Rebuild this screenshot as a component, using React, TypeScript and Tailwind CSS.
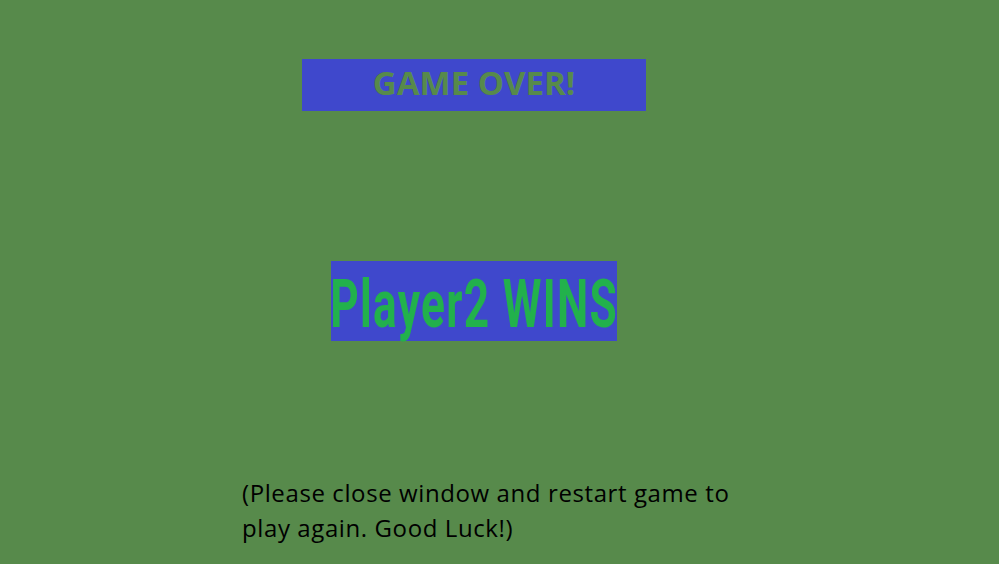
export default function App() {
  return (
    <div className="w-[999px] h-[564px] bg-[#578a4b] overflow-hidden flex flex-col">
      <div className="ml-[302px] mt-[59px] w-[344px] h-[52px] bg-[#3f48cc] flex justify-center pt-[4px]">
        <span className="text-[33px] font-bold text-[#578a4b] leading-[40px]" style={{ fontFamily: '"Open Sans", sans-serif' }}>
          GAME OVER!
        </span>
      </div>
      <div className="ml-[331px] mt-[150px] w-[286px] h-[80px] bg-[#3f48cc] flex items-center justify-center">
        <span className="inline-block text-[67px] font-bold tracking-[2px] text-[#22b14c] leading-none whitespace-nowrap scale-x-[0.66] mt-[6px]" style={{ fontFamily: 'Roboto, sans-serif' }}>
          Player2 WINS
        </span>
      </div>
      <p className="ml-[242px] mt-[134px] w-[500px] text-[24px] tracking-[0.6px] leading-[35px] text-black" style={{ fontFamily: '"Open Sans", sans-serif' }}>
        (Please close window and restart game to play again. Good Luck!)
      </p>
    </div>
  );
}
